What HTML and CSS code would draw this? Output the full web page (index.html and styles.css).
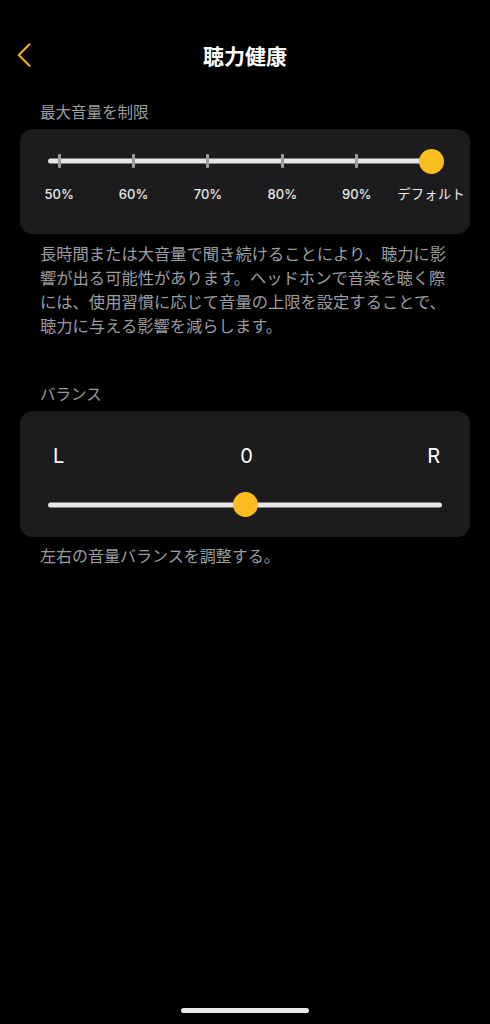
FILE: index.html
```html
<!DOCTYPE html>
<html lang="ja">
<head>
<meta charset="utf-8">
<title>聴力健康</title>
<link rel="stylesheet" href="styles.css">
</head>
<body>
<div class="page">
  <header class="nav">
    <div class="nav-left">
      <svg class="back" width="14" height="24" viewBox="0 0 14 24"><path d="M12.5 1.2 L1.8 12 L12.5 22.8" fill="none" stroke="#f2b417" stroke-width="2" stroke-linecap="round" stroke-linejoin="round"/></svg>
    </div>
    <h1 class="title">聴力健康</h1>
    <div></div>
  </header>

  <section class="section">
    <div class="section-label">最大音量を制限</div>
    <div class="card card-limit">
      <div class="step-slider">
        <div class="track track-limit"></div>
        <div class="cell"><span class="tick"></span></div>
        <div class="cell"><span class="tick"></span></div>
        <div class="cell"><span class="tick"></span></div>
        <div class="cell"><span class="tick"></span></div>
        <div class="cell"><span class="tick"></span></div>
        <div class="cell"><span class="thumb"></span></div>
      </div>
      <div class="step-labels">
        <span>50%</span><span>60%</span><span>70%</span><span>80%</span><span>90%</span><span class="jp">デフォルト</span>
      </div>
    </div>
    <p class="desc">長時間または大音量で聞き続けることにより、聴力に影響が出る可能性があります。ヘッドホンで音楽を聴く際には、使用習慣に応じて音量の上限を設定することで、聴力に与える影響を減らします。</p>
  </section>

  <section class="section section-balance">
    <div class="section-label">バランス</div>
    <div class="card card-balance">
      <div class="lr">
        <span class="l">L</span><span class="c">0</span><span class="r">R</span>
      </div>
      <div class="balance-slider">
        <div class="track"></div>
        <span class="thumb"></span>
      </div>
    </div>
    <p class="caption">左右の音量バランスを調整する。</p>
  </section>

  <div class="home-indicator"></div>
</div>
</body>
</html>
```
FILE: styles.css
```css
* { box-sizing: border-box; }
html, body { margin: 0; padding: 0; background: #000; }
body {
  font-family: Inter, "Noto Sans CJK JP", sans-serif;
  color: #fff;
}
.page {
  height: 1024px;
  display: flex;
  flex-direction: column;
  overflow: hidden;
}
.nav {
  margin-top: 31px;
  height: 48px;
  display: grid;
  grid-template-columns: 1fr auto 1fr;
  align-items: center;
}
.nav-left { padding-left: 17px; display: flex; align-items: center; }
.back { display: block; }
.title {
  margin: 0;
  font-family: "Noto Sans CJK JP", sans-serif;
  font-size: 21px;
  font-weight: 700;
  line-height: 48px;
  color: #fff;
  letter-spacing: 0;
}
.section { padding: 0 20px; }
.section-label {
  margin-top: 22px;
  padding-left: 20px;
  font-family: "Noto Sans CJK JP", sans-serif;
  font-size: 15.5px;
  line-height: 20px;
  color: #9c9ca0;
}
.card {
  margin-top: 8px;
  background: #1c1c1e;
  border-radius: 13px;
}
.card-limit {
  height: 105px;
  padding: 19px 2px 0 2px;
}
.step-slider {
  position: relative;
  display: grid;
  grid-template-columns: repeat(6, 74.4px);
  height: 26px;
  align-items: center;
}
.cell { display: flex; justify-content: center; align-items: center; position: relative; z-index: 1; }
.tick {
  display: block;
  width: 3px;
  height: 14px;
  background: #9d9d9d;
  border-radius: 1px;
}
.track {
  position: absolute;
  height: 5px;
  border-radius: 3px;
  background: #e6e6e6;
  top: 50%;
  transform: translateY(-50%);
}
.track-limit { left: 26px; width: 385px; }
.thumb {
  display: block;
  width: 25px;
  height: 25px;
  border-radius: 50%;
  background: #fbbd1e;
}
.step-labels {
  margin-top: 12px;
  display: grid;
  grid-template-columns: repeat(6, 74.4px);
  font-size: 13px;
  font-weight: 500;
  line-height: 16px;
  color: #e8e8e8;
  text-align: center;
}
.step-labels .jp {
  font-family: "Noto Sans CJK JP", sans-serif;
  font-weight: 400;
  font-size: 13.3px;
  white-space: nowrap;
  letter-spacing: 0.3px;
}
.desc {
  margin: 7px 0 0;
  padding: 0 20px;
  font-family: "Noto Sans CJK JP", sans-serif;
  font-size: 16.3px;
  line-height: 24px;
  color: #9c9ca0;
}
.section-balance .section-label { margin-top: 46px; }
.card-balance {
  height: 126px;
  padding: 33px 28px 0 28px;
}
.lr {
  display: grid;
  grid-template-columns: 1fr auto 1fr;
  font-size: 20px;
  line-height: 24px;
  color: #fff;
  padding: 0 2px 0 5px;
}
.lr .l { justify-self: start; }
.lr .r { justify-self: end; }
.balance-slider {
  position: relative;
  margin-top: 24px;
  height: 25px;
  display: flex;
  justify-content: center;
  align-items: center;
}
.balance-slider .track { left: 0; right: 0; }
.balance-slider .thumb { position: relative; z-index: 1; }
.caption {
  margin: 8px 0 0;
  padding: 0 20px;
  font-family: "Noto Sans CJK JP", sans-serif;
  font-size: 16px;
  line-height: 20px;
  color: #9c9ca0;
}
.home-indicator {
  margin: auto auto 11px;
  width: 128px;
  height: 5px;
  border-radius: 3px;
  background: #e8e8e8;
}
```
